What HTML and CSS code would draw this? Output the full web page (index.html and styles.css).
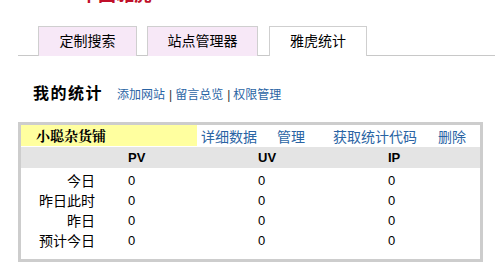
FILE: index.html
```html
<!DOCTYPE html>
<html>
<head>
<meta charset="utf-8">
<link rel="stylesheet" href="styles.css">
</head>
<body>
<div class="page">
  <div class="brand">中国雅虎</div>
  <div class="tabs">
    <div class="tab">定制搜索</div>
    <div class="tab">站点管理器</div>
    <div class="tab active">雅虎统计</div>
  </div>
  <div class="titlebar">
    <h1 class="title">我的统计</h1>
    <a class="lnk">添加网站</a><span class="sep">|</span><a class="lnk">留言总览</a><span class="sep">|</span><a class="lnk">权限管理</a>
  </div>
  <div class="box">
    <div class="site">
      <div class="sitename">小聪杂货铺</div>
      <a class="act a1">详细数据</a>
      <a class="act a2">管理</a>
      <a class="act a3">获取统计代码</a>
      <a class="act a4">删除</a>
    </div>
    <table class="stats">
      <colgroup><col class="c0"><col class="c1"><col class="c1"><col class="c3"></colgroup>
      <tr class="head"><td class="lab"></td><td>PV</td><td>UV</td><td>IP</td></tr>
      <tr class="first"><td class="lab">今日</td><td>0</td><td>0</td><td>0</td></tr>
      <tr><td class="lab">昨日此时</td><td>0</td><td>0</td><td>0</td></tr>
      <tr><td class="lab">昨日</td><td>0</td><td>0</td><td>0</td></tr>
      <tr><td class="lab">预计今日</td><td>0</td><td>0</td><td>0</td></tr>
    </table>
  </div>
</div>
</body>
</html>
```

FILE: styles.css
```css
html, body {
  margin: 0;
  padding: 0;
  background: #fff;
}
body {
  font-family: "Liberation Sans", "Noto Sans CJK SC", sans-serif;
  color: #000;
  width: 495px;
  height: 276px;
  overflow: hidden;
}
.brand {
  margin: -16px 0 0 80px;
  height: 22px;
  font-size: 18px;
  line-height: 22px;
  font-weight: bold;
  color: #c0102a;
}
.tabs {
  display: flex;
  margin: 20px 0 0 18px;
  padding-left: 20px;
  border-bottom: 1px solid #c8c8c8;
  height: 29px;
  gap: 10px;
}
.tab {
  box-sizing: border-box;
  height: 30px;
  width: 99px;
  border: 1px solid #cfcfcf;
  border-bottom: none;
  background: #f7e8f7;
  font-size: 14px;
  line-height: 29px;
  text-align: center;
}
.tab:nth-child(2) {
  width: 111px;
}
.tab.active {
  background: #fff;
  width: 98px;
  margin-left: 1px;
}
.titlebar {
  display: flex;
  align-items: baseline;
  margin: 24px 0 0 33px;
  height: 26px;
}
.title {
  margin: 0 14px 0 0;
  font-size: 16px;
  font-weight: bold;
  letter-spacing: 1.5px;
}
.lnk {
  font-size: 12px;
  color: #2a64a4;
}
.sep {
  font-size: 12px;
  color: #333;
  margin: 0 3px 0 4px;
}
.box {
  margin: 16px 0 0 18px;
  width: 459px;
  height: 134px;
  border: 3px solid #cdcdcd;
}
.site {
  display: flex;
  height: 21px;
  align-items: center;
  font-size: 14px;
  margin-bottom: 1px;
}
.sitename {
  width: 161px;
  height: 21px;
  line-height: 21px;
  padding-left: 15px;
  background: #ffff9f;
  font-weight: bold;
  font-family: "Noto Serif CJK SC", "Noto Sans CJK SC", serif;
  font-size: 14px;
}
.act {
  color: #2a64a4;
}
.a1 { margin-left: 4px; }
.a2 { margin-left: 20px; }
.a3 { margin-left: 28px; }
.a4 { margin-left: 21px; }
.stats {
  border-collapse: collapse;
  table-layout: fixed;
  width: 459px;
  font-size: 13px;
}
.c0 { width: 107px; }
.c1 { width: 130px; }
.c3 { width: 92px; }
.stats td {
  padding: 0;
  height: 20px;
  line-height: 20px;
  text-align: left;
}
.stats td.lab {
  text-align: right;
  padding-right: 33px;
  font-size: 14px;
}
.stats tr.head td {
  background: #e4e4e4;
  font-weight: bold;
  height: 21px;
  line-height: 21px;
}
.stats tr.first td {
  border-top: 3px solid #fff;
}
```
